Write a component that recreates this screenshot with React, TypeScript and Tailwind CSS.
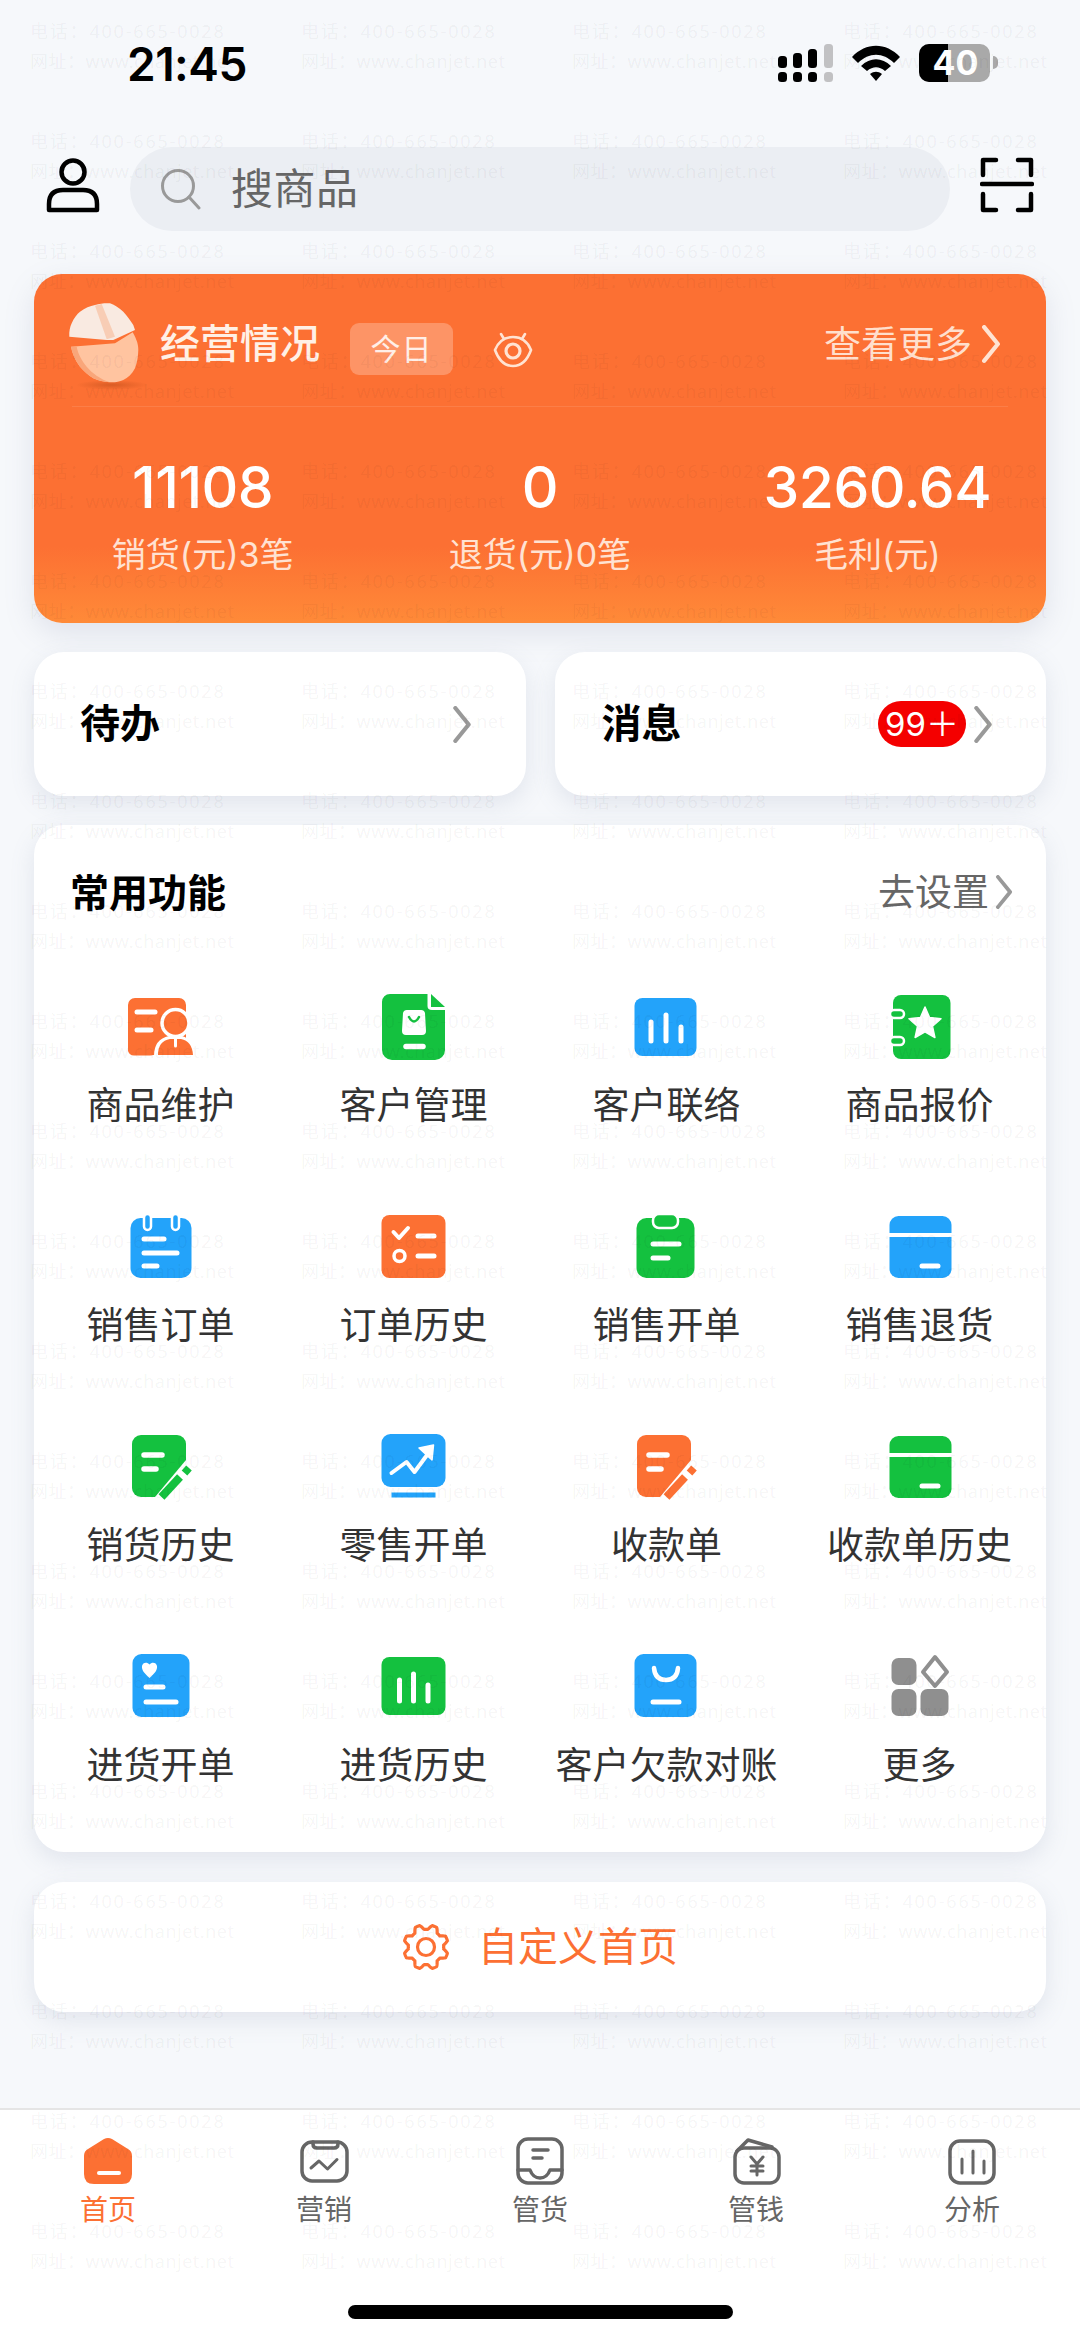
import React from "react";

const O = "#FC7033";
const G = "#14C13F";
const B = "#23A3FA";
const W = "#ffffff";

function Ico({ children }: { children: React.ReactNode }) {
  return (
    <svg width="72" height="72" viewBox="0 0 72 72" fill="none" strokeLinecap="round" strokeLinejoin="round">
      {children}
    </svg>
  );
}

function Bars({ xs, tops, bottom }: { xs: number[]; tops: number[]; bottom: number }) {
  return (
    <>
      {xs.map((x, i) => (
        <line key={i} x1={x} x2={x} y1={tops[i]} y2={bottom} stroke={W} strokeWidth="5" />
      ))}
    </>
  );
}

function PenDoc({ c, dx }: { c: string; dx: number }) {
  return (
    <g transform={`translate(${dx} 0)`}>
      <path d="M16 5 H52 a9 9 0 0 1 9 9 V30 L30 67 H16 a9 9 0 0 1 -9 -9 V14 a9 9 0 0 1 9 -9 Z" fill={c} />
      <line x1="19" x2="37" y1="25" y2="25" stroke={W} strokeWidth="5.5" />
      <line x1="19" x2="31" y1="39" y2="39" stroke={W} strokeWidth="5.5" />
      <path d="M36.5 67 L55 47" stroke={c} strokeWidth="8" strokeLinecap="butt" />
      <path d="M59.5 43 L64 38" stroke={c} strokeWidth="7.5" strokeLinecap="butt" />
    </g>
  );
}

const icons: React.ReactNode[] = [
  <Ico key="a">
    <path d="M10 8 H54 a7 7 0 0 1 7 7 V60 H30 V65 H10 a7 7 0 0 1 -7 -7 V15 a7 7 0 0 1 7 -7 Z" fill={O} />
    <rect x="3" y="55" width="28" height="10.500" rx="6" fill={O} />
    <line x1="12" x2="30" y1="22" y2="22" stroke={W} strokeWidth="5" />
    <line x1="12" x2="26" y1="40" y2="40" stroke={W} strokeWidth="5" />
    <circle cx="50.500" cy="33" r="13.500" fill={O} stroke={W} strokeWidth="3.500" />
    <path d="M29 66 Q29 49 44 46 H57 Q69 49 70 66 Z" fill={W} />
    <path d="M33 65 Q33 51 45 49 H56 Q67 51 68 65 Z" fill={O} />
    <line x1="50.500" x2="50.500" y1="48" y2="56" stroke={W} strokeWidth="3" />
  </Ico>,
  <Ico key="b">
    <path d="M12 4 H49.500 V16 Q49.500 20 54 20 H67 V60 a10 10 0 0 1 -10 10 H14 a10 10 0 0 1 -10 -10 V12 a8 8 0 0 1 8 -8 Z" fill={G} />
    <path d="M53 4 L67 17 H53 Z" fill={G} />
    <path d="M29 20 H43 a4 4 0 0 1 4 3 L48 41 a4 4 0 0 1 -4 4 H28 a4 4 0 0 1 -4 -4 L25 23 a4 4 0 0 1 4 -3 Z" fill={W} />
    <path d="M31 27 Q36 36 41 27" stroke={G} strokeWidth="2.500" />
    <line x1="28" x2="45" y1="56.500" y2="56.500" stroke={W} strokeWidth="5.500" />
  </Ico>,
  <Ico key="c">
    <rect x="3.500" y="8" width="62" height="58" rx="8" fill={B} />
    <Bars xs={[20, 35, 50]} tops={[32, 25, 37]} bottom={51} />
  </Ico>,
  <Ico key="d">
    <rect x="9" y="5" width="57.500" height="64" rx="8" fill={G} />
    <rect x="6" y="20" width="14" height="8" rx="4" fill={G} stroke={W} strokeWidth="2.500" />
    <rect x="6" y="47" width="14" height="8" rx="4" fill={G} stroke={W} strokeWidth="2.500" />
    <path d="M41 17 L45.600 27.500 L57 28.700 L48.500 36.300 L50.900 47.500 L41 41.800 L31.100 47.500 L33.500 36.300 L25 28.700 L36.400 27.500 Z" fill={W} stroke={W} strokeWidth="1.500" />
  </Ico>,
  <Ico key="e">
    <rect x="5.500" y="8" width="61" height="60" rx="10" fill={B} />
    <rect x="19" y="4" width="7" height="16" rx="3.500" fill={B} stroke={W} strokeWidth="2.500" />
    <rect x="47" y="4" width="7" height="16" rx="3.500" fill={B} stroke={W} strokeWidth="2.500" />
    <line x1="19" x2="39" y1="29" y2="29" stroke={W} strokeWidth="5" />
    <line x1="19" x2="52" y1="43" y2="43" stroke={W} strokeWidth="5" />
    <line x1="19" x2="32" y1="56" y2="56" stroke={W} strokeWidth="5" />
  </Ico>,
  <Ico key="f">
    <rect x="3.500" y="5" width="64" height="63" rx="8" fill={O} />
    <path d="M15.500 22 L21 28 L30 18" stroke={W} strokeWidth="4" />
    <line x1="40" x2="56" y1="26" y2="26" stroke={W} strokeWidth="5" />
    <circle cx="21.500" cy="46" r="5.500" stroke={W} strokeWidth="3.500" />
    <line x1="40" x2="56" y1="46" y2="46" stroke={W} strokeWidth="5" />
  </Ico>,
  <Ico key="g">
    <rect x="5.500" y="8" width="58" height="60" rx="10" fill={G} />
    <rect x="22" y="4" width="25" height="14" rx="6" fill={G} stroke={W} strokeWidth="2.500" />
    <line x1="22" x2="48" y1="34" y2="34" stroke={W} strokeWidth="5" />
    <line x1="22" x2="37" y1="48" y2="48" stroke={W} strokeWidth="5" />
  </Ico>,
  <Ico key="h">
    <rect x="5.500" y="6" width="62" height="62" rx="9" fill={B} />
    <rect x="4" y="23" width="65" height="4" fill={W} />
    <line x1="38" x2="54" y1="56" y2="56" stroke={W} strokeWidth="5" />
  </Ico>,
  <Ico key="i">
    <PenDoc c={G} dx={0} />
  </Ico>,
  <Ico key="j">
    <rect x="3.500" y="4" width="64" height="53" rx="9" fill={B} />
    <line x1="13.500" x2="57.500" y1="65" y2="65" stroke={B} strokeWidth="5" strokeLinecap="butt" />
    <path d="M13.500 43 L28.500 32 L36.500 42 L52 21" stroke={W} strokeWidth="4" />
    <path d="M41 18 L55.500 15 L54 30 Z" fill={W} stroke={W} strokeWidth="1.500" />
  </Ico>,
  <Ico key="k">
    <PenDoc c={O} dx={-1} />
  </Ico>,
  <Ico key="l">
    <rect x="5.500" y="6" width="62" height="62" rx="9" fill={G} />
    <rect x="4" y="23" width="65" height="4" fill={W} />
    <line x1="38" x2="54" y1="56" y2="56" stroke={W} strokeWidth="5" />
  </Ico>,
  <Ico key="m">
    <rect x="7.500" y="4" width="57" height="63" rx="9" fill={B} />
    <path d="M24.500 28 C19 23 16.500 20 17 16 C17.600 12.500 22 11.500 24.500 14.500 C27 11.500 31.400 12.500 32 16 C32.500 20 30 23 24.500 28 Z" fill={W} />
    <line x1="21" x2="38" y1="37" y2="37" stroke={W} strokeWidth="5" />
    <line x1="21" x2="51" y1="52" y2="52" stroke={W} strokeWidth="5" />
  </Ico>,
  <Ico key="n">
    <rect x="3.500" y="7" width="64" height="58" rx="8" fill={G} />
    <Bars xs={[21.5, 35.5, 50]} tops={[30, 24, 35]} bottom={51} />
  </Ico>,
  <Ico key="o">
    <rect x="3.500" y="4" width="62" height="63" rx="9" fill={B} />
    <path d="M23 18 Q24 30 35 30 Q46 30 47 18" stroke={W} strokeWidth="4.500" />
    <line x1="22" x2="48" y1="52" y2="52" stroke={W} strokeWidth="5" />
  </Ico>,
  <Ico key="p">
    <rect x="7.500" y="8" width="25" height="27" rx="7" fill="#8F8F8F" />
    <rect x="7.500" y="39" width="25" height="27" rx="7" fill="#8F8F8F" />
    <rect x="36.500" y="39" width="28" height="27" rx="7" fill="#8F8F8F" />
    <path d="M51 7 L63 22 L51 36 L39 22 Z" stroke="#8F8F8F" strokeWidth="4" />
  </Ico>,
];

const labels = [
  "商品维护", "客户管理", "客户联络", "商品报价",
  "销售订单", "订单历史", "销售开单", "销售退货",
  "销货历史", "零售开单", "收款单", "收款单历史",
  "进货开单", "进货历史", "客户欠款对账", "更多",
];

function Chevron({ className, color = "#999999" }: { className: string; color?: string }) {
  return (
    <svg className={className} viewBox="0 0 18 36" fill="none">
      <path d="M2.500 2 L15.500 18 L2.500 34" stroke={color} strokeWidth="4" strokeLinecap="round" strokeLinejoin="round" />
    </svg>
  );
}

function Pill() {
  return (
    <svg width="84" height="92" viewBox="0 0 84 92" className="shrink-0">
      <defs>
        <radialGradient id="pillShadow">
          <stop offset="0" stopColor="#C2501C" stopOpacity="0.6" />
          <stop offset="1" stopColor="#C2501C" stopOpacity="0" />
        </radialGradient>
      </defs>
      <ellipse cx="48" cy="87" rx="36" ry="5" fill="url(#pillShadow)" />
      <path d="M7 48.700 L29.300 47 L51 45.300 L68.700 34.300 C73 42 74.500 47 74.300 52 C74 60 73 65 71 70.300 C68 76 64 80 59.300 82 C55 84 51 84.500 46 84.300 C40 84 34 82.500 29.300 80.300 C24 77 20 73 16 68.700 C11 62 8 55 7 48.700 Z" fill="#FFC4A0" />
      <path d="M7 48.700 L12.700 48.700 C14 56 18 63 22.700 68.700 C28 75 36 81 46 84.300 C40 84 34 82.500 29.300 80.300 C24 77 20 73 16 68.700 C11 62 8 55 7 48.700 Z" fill="#F9A67A" />
      <path d="M5.300 38.700 C5 33 6 29 7.700 25.300 C10 20 13 16 16 13.700 C21 10 26 8 31 7 C36 5.500 41 5 46 5.300 C51 7 55 10 59.300 13.700 C63 18 67 23 69.300 27 L71 32 L49.300 42 L42.700 42 Z" fill="#F9EAE1" />
      <path d="M31 7.700 L37.700 6 L51 38.700 L42.700 41.300 Z" fill="#F8CDB5" />
    </svg>
  );
}

function Gear() {
  const pts = Array.from({ length: 240 }).map((_, i) => {
    const t = (i / 240) * Math.PI * 2;
    const w = Math.cos(8 * t + Math.PI);
    const r = 20 + 2.300 * Math.max(-1, Math.min(1, w * 1.500));
    return `${(24 + r * Math.sin(t)).toFixed(2)},${(24 - r * Math.cos(t)).toFixed(2)}`;
  });
  return (
    <svg width="48" height="48" viewBox="0 0 48 48" fill="none" stroke={O} strokeWidth="3.200" strokeLinejoin="round">
      <polygon points={pts.join(" ")} />
      <circle cx="24" cy="24" r="8.500" />
    </svg>
  );
}

function TabIcon({ children }: { children: React.ReactNode }) {
  return (
    <svg width="60" height="56" viewBox="0 0 60 56" fill="none" stroke="#666666" strokeWidth="3.500" strokeLinecap="round" strokeLinejoin="round">
      {children}
    </svg>
  );
}

const tabs: { label: string; icon: React.ReactNode; active?: boolean }[] = [
  {
    label: "首页",
    active: true,
    icon: (
      <TabIcon>
        <path d="M6 22 Q6 17 10 15 L26 5 Q30 3 34 5 L50 15 Q54 17 54 22 V40 Q54 50 44 50 H16 Q6 50 6 40 Z" fill={O} stroke="none" />
        <line x1="21" x2="41" y1="39" y2="39" stroke={W} strokeWidth="4" />
      </TabIcon>
    ),
  },
  {
    label: "营销",
    icon: (
      <TabIcon>
        <rect x="8" y="8" width="45" height="39" rx="10" />
        <path d="M19 8 V10 Q19 14 23 14 H40 Q44 14 44 10 V8" />
        <path d="M17 34 L25 27 L33.500 35 L43 25.500" strokeWidth="3" />
      </TabIcon>
    ),
  },
  {
    label: "管货",
    icon: (
      <TabIcon>
        <rect x="8" y="5" width="44" height="44" rx="10" />
        <path d="M8 36 H20 Q23 44 30 44 Q37 44 40 36 H52" />
        <line x1="23" x2="38" y1="16" y2="16" strokeWidth="3.500" />
        <line x1="23" x2="32" y1="24" y2="24" strokeWidth="3.500" />
      </TabIcon>
    ),
  },
  {
    label: "管钱",
    icon: (
      <TabIcon>
        <rect x="9" y="14" width="44" height="35" rx="9" />
        <path d="M11 17 L22 6 L46 13" />
        <path d="M25 23 L31 30 L37 23 M31 30 V41 M25 32 H37 M25 37 H37" strokeWidth="3" />
      </TabIcon>
    ),
  },
  {
    label: "分析",
    icon: (
      <TabIcon>
        <rect x="8" y="7" width="44" height="42" rx="10" />
        <line x1="20" x2="20" y1="25" y2="39" strokeWidth="3" />
        <line x1="31" x2="31" y1="17" y2="39" strokeWidth="3" />
        <line x1="42" x2="42" y1="27" y2="39" strokeWidth="3" />
      </TabIcon>
    ),
  },
];

const stats = [
  { v: "11108", l: "销货(元)3笔" },
  { v: "0", l: "退货(元)0笔" },
  { v: "3260.64", l: "毛利(元)" },
];

export default function App() {
  return (
    <div className="relative w-[1080px] h-[2337px] overflow-hidden bg-[#f6f8fb] flex flex-col font-['Inter','Noto_Sans_CJK_SC',sans-serif]">
      {/* status bar */}
      <div className="h-[147px] shrink-0 flex items-start">
        <div className="ml-[127px] mt-[36px] text-[46px] leading-[56px] font-semibold text-black tracking-[-0.5px]">21:45</div>
        <div className="ml-auto mt-[44px] mr-[82px] flex items-start">
          <svg width="56" height="38" viewBox="0 0 56 38" fill="#000">
            <rect x="0" y="12" width="9" height="12" rx="3.500" />
            <rect x="15" y="9" width="9" height="15" rx="3.500" />
            <rect x="30" y="5" width="9" height="19" rx="3.500" />
            <rect x="46" y="0" width="9" height="24" rx="3.500" fill="#c1c1c3" />
            <rect x="0" y="28" width="9" height="10" rx="3.500" />
            <rect x="15" y="28" width="9" height="10" rx="3.500" />
            <rect x="30" y="28" width="9" height="10" rx="3.500" />
            <rect x="46" y="28" width="9" height="10" rx="3.500" fill="#c1c1c3" />
          </svg>
          <svg className="ml-[18px] mt-[1px]" width="48" height="36" viewBox="0 0 48 36" fill="#000">
            <path d="M0 12 C14 -3 34 -3 48 12 L42 18 C31 7 17 7 6 18 Z" />
            <path d="M9 21 C18 12 30 12 39 21 L33 26 C27 21 21 21 15 26 Z" />
            <path d="M18 29 C22 26 26 26 30 29 L24 36 Z" />
          </svg>
          <div className="ml-[19px] relative w-[71px] h-[38px] rounded-[10px] overflow-hidden bg-[#a9a9a9] flex">
            <div className="w-[29px] h-full bg-black" />
            <div className="absolute inset-0 flex items-center justify-center text-white text-[34px] font-bold leading-none pl-[2px]">40</div>
          </div>
          <div className="ml-[3px] mt-[12px] w-[5px] h-[13px] rounded-r-[5px] bg-[#a9a9a9]" />
        </div>
      </div>

      {/* search row */}
      <div className="h-[84px] shrink-0 flex items-center pl-[46px] pr-[46px]">
        <svg width="54" height="64" viewBox="0 0 54 64" fill="none" stroke="#000" strokeWidth="4.500" className="shrink-0">
          <circle cx="27" cy="15" r="11.500" />
          <path d="M3 53 V47 Q3 33 17 33 H37 Q51 33 51 47 V53 Z" strokeLinejoin="round" />
        </svg>
        <div className="ml-[30px] w-[820px] h-[84px] rounded-[42px] bg-[#ebeef3] flex items-center pl-[30px]">
          <svg width="42" height="42" viewBox="0 0 42 42" fill="none" stroke="#999999" strokeWidth="3" strokeLinecap="round">
            <circle cx="18" cy="18" r="15.500" />
            <line x1="29" x2="39" y1="29" y2="40" />
          </svg>
          <span className="ml-[29px] text-[42px] leading-none text-[#666666] tracking-[0.5px]">搜商品</span>
        </div>
        <svg className="ml-[30px] shrink-0" width="54" height="64" viewBox="0 0 54 64" fill="none" stroke="#000" strokeWidth="4.500" strokeLinecap="round" strokeLinejoin="round">
          <path d="M3 18 V3 H16 M38 3 H51 V18 M3 37 V53 H16 M38 53 H51 V37" />
          <line x1="2" x2="52" y1="27" y2="27" />
        </svg>
      </div>

      {/* business card */}
      <div className="mx-[34px] mt-[43px] h-[349px] shrink-0 rounded-[28px] bg-[linear-gradient(180deg,#FC7033_0%,#FC7033_78%,#FF8A38_100%)] shadow-[0_10px_30px_rgba(120,130,160,0.18)] flex flex-col">
        <div className="relative h-[132px] shrink-0 flex items-center pt-[8px] pl-[30px] pr-[44px]">
          <Pill />
          <span className="ml-[12px] text-[40px] font-medium leading-none text-[#fff0e6]">经营情况</span>
          <span className="ml-[30px] mt-[10px] w-[103px] h-[52px] rounded-[9px] bg-white/25 flex items-center justify-center text-[30px] leading-none text-white/85 tracking-[1px]">今日</span>
          <svg className="ml-[40px] mt-[8px]" width="40" height="40" viewBox="0 0 40 40" fill="none" stroke="#FFE3D2" strokeWidth="2.600" strokeLinecap="round">
            <path d="M2 22 C6 12 13 9 20 9 C27 9 34 12 38 22 C34 33 27 38 20 38 C13 38 6 33 2 22 Z" />
            <circle cx="20" cy="23" r="7" strokeWidth="3.200" />
            <path d="M8 6 L11 11 M32 6 L29 11" />
          </svg>
          <span className="ml-auto text-[37px] leading-none text-[#ffdfcd]">查看更多</span>
          <Chevron className="ml-[8px] w-[22px] h-[38px]" color="#FFE3D2" />
        </div>
        <div className="mx-[38px] h-px shrink-0 bg-white/10" />
        <div className="grid grid-cols-3 pt-[52px]">
          {stats.map((s) => (
            <div key={s.l} className="flex flex-col items-center">
              <div className="text-[57px] leading-[58px] font-medium text-white tracking-[-0.5px]">{s.v}</div>
              <div className="mt-[16px] text-[34px] leading-[44px] text-[#ffe2d2]">{s.l}</div>
            </div>
          ))}
        </div>
      </div>

      {/* todo + messages */}
      <div className="mx-[34px] mt-[29px] h-[144px] shrink-0 grid grid-cols-2 gap-[29px]">
        <div className="rounded-[30px] bg-white flex items-center pl-[46px] pr-[54px] shadow-[0_8px_24px_rgba(120,130,160,0.16)]">
          <span className="text-[40px] font-bold leading-none text-black">待办</span>
          <Chevron className="ml-auto w-[20px] h-[37px]" />
        </div>
        <div className="rounded-[30px] bg-white flex items-center pl-[47px] pr-[53px] shadow-[0_8px_24px_rgba(120,130,160,0.16)]">
          <span className="text-[40px] font-bold leading-none text-black">消息</span>
          <span className="ml-auto h-[46px] w-[88px] rounded-[23px] bg-[#f40000] text-white text-[33px] leading-none flex items-center justify-center">99＋</span>
          <Chevron className="ml-[7px] w-[20px] h-[37px]" />
        </div>
      </div>

      {/* common functions */}
      <div className="mx-[34px] mt-[29px] h-[1027px] shrink-0 rounded-[30px] bg-white shadow-[0_8px_24px_rgba(120,130,160,0.16)] pt-[42px]">
        <div className="h-[50px] flex items-center pl-[36px] pr-[32px]">
          <span className="text-[39px] font-bold leading-none text-black">常用功能</span>
          <span className="ml-auto text-[37px] leading-none text-[#666666]">去设置</span>
          <Chevron className="ml-[5px] w-[20px] h-[34px]" />
        </div>
        <div className="mt-[73px] grid grid-cols-4 gap-y-[79px]">
          {labels.map((l, i) => (
            <div key={l} className="flex flex-col items-center">
              {icons[i]}
              <div className="mt-[19px] h-[50px] text-[37px] leading-[50px] whitespace-nowrap text-[#333333]">{l}</div>
            </div>
          ))}
        </div>
      </div>

      {/* customize */}
      <div className="mx-[34px] mt-[30px] h-[130px] shrink-0 rounded-[30px] bg-white shadow-[0_8px_24px_rgba(120,130,160,0.16)] flex items-center justify-center">
        <Gear />
        <span className="ml-[28px] text-[40px] leading-none text-[#FC7033]">自定义首页</span>
      </div>

      {/* tab bar */}
      <div className="mt-auto h-[229px] shrink-0 bg-white border-t-2 border-[#e5e5e5] relative">
        <div className="grid grid-cols-5 pt-[24px]">
          {tabs.map((t) => (
            <div key={t.label} className="flex flex-col items-center">
              {t.icon}
              <span className={t.active ? "mt-[1px] text-[28px] leading-[38px] text-[#FC7033]" : "mt-[1px] text-[28px] leading-[38px] text-[#666666]"}>{t.label}</span>
            </div>
          ))}
        </div>
        <div className="absolute left-[348px] top-[195px] w-[385px] h-[14px] rounded-[7px] bg-black" />
      </div>

      {/* watermark overlay */}
      <div className="absolute inset-0 pointer-events-none grid grid-cols-[repeat(4,271px)] auto-rows-[110px] pl-[30px] pt-[16px] text-[18px] leading-[30px] text-black/[0.05] font-['Noto_Sans','Noto_Sans_CJK_SC',sans-serif]">
        {Array.from({ length: 84 }).map((_, i) => (
          <div key={i} className="whitespace-nowrap">
            <div className="tracking-[1.8px]">电话：400-665-0028</div>
            <div className="tracking-[0.5px]">网址：www.chanjet.net</div>
          </div>
        ))}
      </div>
    </div>
  );
}
